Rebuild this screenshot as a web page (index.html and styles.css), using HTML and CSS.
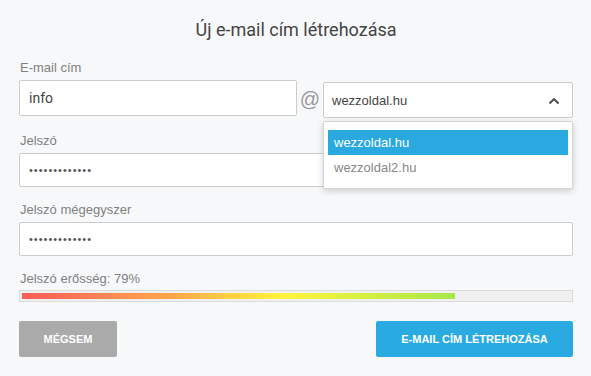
FILE: index.html
```html
<!DOCTYPE html>
<html lang="hu">
<head>
    <meta charset="UTF-8">
    <meta name="viewport" content="width=device-width, initial-scale=1.0">
    <title>Új e-mail cím létrehozása</title>
    <link rel="stylesheet" href="styles.css">
</head>
<body>
    <div class="dialog">
        <h1 class="title">Új e-mail cím létrehozása</h1>

        <div class="field">
            <label class="label">E-mail cím</label>
            <div class="email-row">
                <input type="text" class="input" value="info">
                <span class="at">@</span>
                <div class="select-wrap">
                    <div class="select">
                        <span>wezzoldal.hu</span>
                        <svg class="chevron" width="12" height="8" viewBox="0 0 12 8">
                            <path d="M1.5 6.5 L6 2 L10.5 6.5" fill="none" stroke="#444" stroke-width="1.8"/>
                        </svg>
                    </div>
                    <ul class="dropdown">
                        <li class="option active">wezzoldal.hu</li>
                        <li class="option">wezzoldal2.hu</li>
                    </ul>
                </div>
            </div>
        </div>

        <div class="field">
            <label class="label">Jelszó</label>
            <input type="password" class="input pw" value="abcdefghijklm">
        </div>

        <div class="field">
            <label class="label">Jelszó mégegyszer</label>
            <input type="password" class="input pw" value="abcdefghijklm">
        </div>

        <div class="strength">
            <div class="label">Jelszó erősség: 79%</div>
            <div class="meter">
                <div class="meter-fill" style="width: 79%"></div>
            </div>
        </div>

        <div class="actions">
            <button class="btn btn-cancel">MÉGSEM</button>
            <button class="btn btn-primary">E-MAIL CÍM LÉTREHOZÁSA</button>
        </div>
    </div>
</body>
</html>
```

FILE: styles.css
```css
body {
    margin: 0;
    background-color: #f7f8fa;
    font-family: "Liberation Sans", Arial, sans-serif;
}
.dialog {
    padding: 0 18px 0 19px;
}
.title {
    margin: 0;
    padding-top: 19px;
    height: 24px;
    line-height: 22px;
    text-align: center;
    font-family: Roboto, sans-serif;
    font-weight: 400;
    font-size: 18px;
    color: #444;
    margin-bottom: 17px;
}
.field {
    margin-bottom: 15px;
}
.label {
    display: block;
    font-size: 13px;
    line-height: 15px;
    color: #808080;
    padding-left: 1px;
    margin-bottom: 5px;
}
.input {
    display: block;
    box-sizing: border-box;
    width: 100%;
    height: 34px;
    padding: 0 9px;
    border: 1px solid #ccc;
    border-radius: 2px;
    background: white;
    font-family: Roboto, sans-serif;
    font-size: 14px;
    color: #444;
    outline: none;
}
.pw {
    font-family: "Liberation Sans", sans-serif;
    font-size: 11px;
    letter-spacing: 1px;
    color: #555;
}
.email-row {
    display: grid;
    grid-template-columns: 278px 26px 1fr;
    align-items: start;
}
.email-row .input {
    height: 36px;
}
.at {
    text-align: center;
    font-size: 20px;
    line-height: 38px;
    color: #9a9a9a;
}
.select-wrap {
    position: relative;
    margin-top: 2px;
}
.select {
    box-sizing: border-box;
    height: 36px;
    display: flex;
    align-items: center;
    justify-content: space-between;
    padding: 0 12px 0 8px;
    background: white;
    border: 1px solid #ccc;
    border-radius: 2px;
    font-size: 13px;
    color: #444;
}
.chevron {
    margin-top: 1px;
}
.dropdown {
    position: absolute;
    top: 39px;
    left: 0;
    right: 0;
    margin: 0;
    padding: 8px 4px;
    list-style: none;
    background: white;
    border: 1px solid #d4d4d4;
    border-radius: 2px;
    box-shadow: 0 2px 6px rgba(0, 0, 0, 0.18);
    z-index: 10;
}
.option {
    height: 25px;
    line-height: 25px;
    padding-left: 6px;
    font-size: 13px;
    color: #888;
}
.option.active {
    background-color: #29a9e0;
    color: white;
}
.strength .label {
    margin-bottom: 4px;
}
.meter {
    box-sizing: border-box;
    height: 12px;
    border: 1px solid #dcdcdc;
    background: #f0f0f0;
    padding: 2px 2px;
}
.meter-fill {
    height: 100%;
    background: linear-gradient(to right, #ff5a5a, #ffa84a 35%, #fff53a 60%, #a8e84a);
}
.actions {
    display: flex;
    justify-content: space-between;
    margin-top: 19px;
}
.btn {
    height: 36px;
    border: none;
    border-radius: 2px;
    color: white;
    font-family: "Liberation Sans", Arial, sans-serif;
    font-weight: bold;
    font-size: 11px;
    cursor: pointer;
}
.btn-cancel {
    width: 98px;
    background-color: #aaaaaa;
}
.btn-primary {
    width: 197px;
    background-color: #29abe2;
}
```
